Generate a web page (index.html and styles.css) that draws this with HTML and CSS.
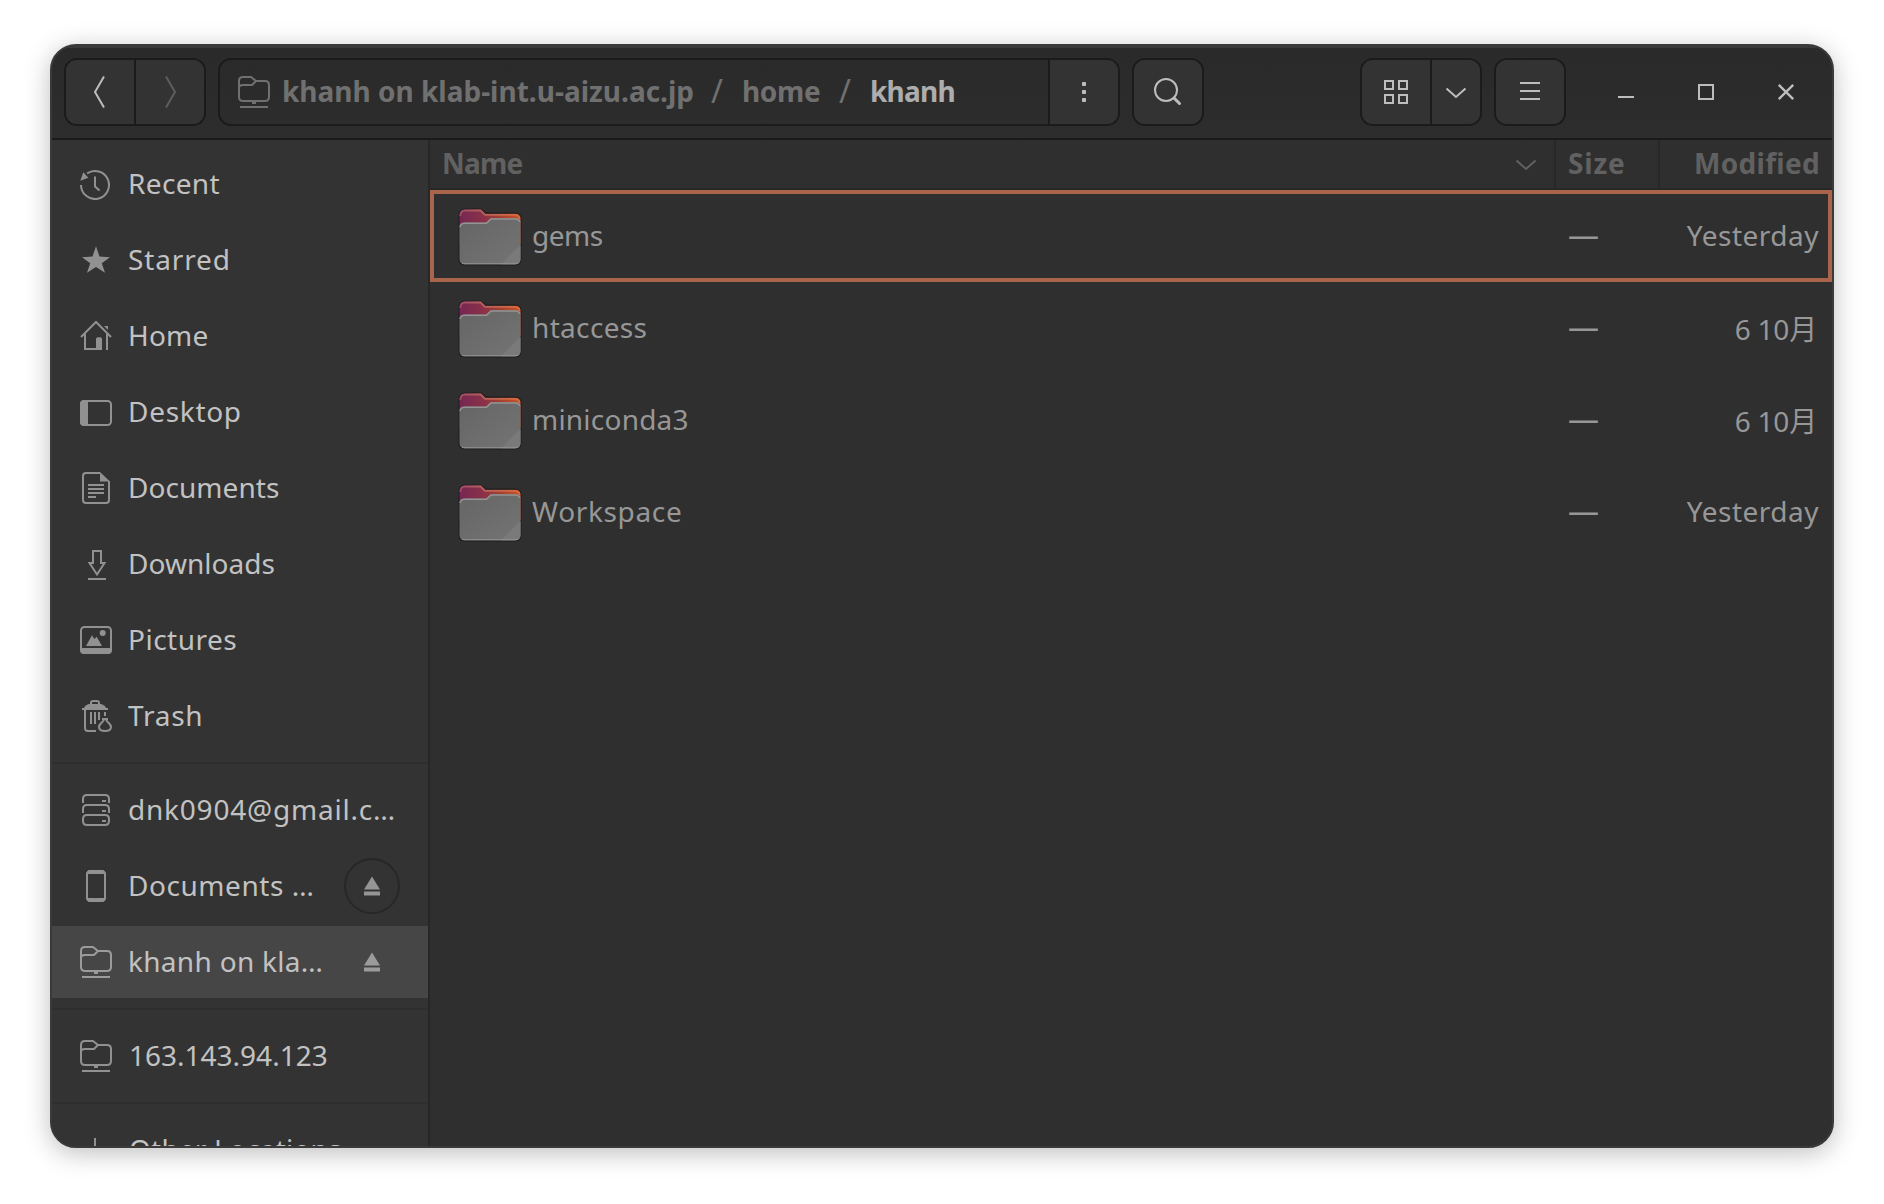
FILE: index.html
```
<!DOCTYPE html>
<html lang="en">
<head>
<meta charset="utf-8">
<title>khanh</title>
<link rel="stylesheet" href="styles.css">
</head>
<body>
<svg class="defs" width="0" height="0">
  <defs>
    <linearGradient id="back" x1="0" y1="0" x2="1" y2="0">
      <stop offset="0" stop-color="#752752"/><stop offset=".4" stop-color="#8c3148"/><stop offset=".7" stop-color="#a8432c"/><stop offset="1" stop-color="#c9542c"/>
    </linearGradient>
    <linearGradient id="rim" x1="0" y1="0" x2="1" y2="0">
      <stop offset="0" stop-color="#9c4c67"/><stop offset=".4" stop-color="#b5615a"/><stop offset="1" stop-color="#d96b3c"/>
    </linearGradient>
    <linearGradient id="front" x1="0" y1="0" x2="1" y2="1">
      <stop offset="0" stop-color="#656565"/><stop offset="1" stop-color="#747474"/>
    </linearGradient>
    <symbol id="remote" viewBox="0 0 32 32">
      <path d="M1 21V5Q1 1 5 1H13L18 5H27Q31 5 31 9V21Q31 25 27 25H5Q1 25 1 21ZM1 12Q1 9 5 9H14L18 5M2 31H30" />
      <path class="solid" d="M14 26h4v2h-4z"/>
    </symbol>
    <symbol id="eject" viewBox="0 0 16 20">
      <path class="solid" d="M8 .5 16 13.5H0ZM0 15.500h16v4H0z"/>
    </symbol>
    <symbol id="folder" viewBox="0 0 64 64">
      <g stroke="none">
        <path d="M.5 12Q.5 4.500 7 4.500H23L28 8.500H57Q63.500 8.500 63.500 15V55Q63.500 61.500 57 61.500H7Q.5 61.500 .5 55Z" fill="#1e1e1e"/>
        <path d="M1.500 12Q1.500 5.500 7 5.500H23L27.500 9.800H57Q62.500 9.800 62.500 15V40H1.500Z" fill="url(#back)"/>
      </g>
      <path d="M2.300 12Q2.500 6.500 7 6.500H22.500L27 10.800H57Q61 10.800 61.700 15" fill="none" stroke="url(#rim)" stroke-width="1.800"/>
      <g stroke="none">
        <path d="M1.500 24Q1.500 18.500 7 18.500H28L32.500 14.200H57Q62.500 14.200 62.500 19V55Q62.500 60.300 57 60.300H7Q1.500 60.300 1.500 55Z" fill="url(#front)"/>
        <path d="M62.500 41V55Q62.500 60.300 57 60.300H43Z" fill="#7a7a7a"/>
      </g>
      <path d="M2 23Q2.500 19.300 7 19.300H28.500L33 15H57Q61 15 62 18" fill="none" stroke="#949494" stroke-width="1.500"/>
      <path d="M4 59Q5 59.800 7 59.800H57Q59 59.800 60 59" fill="none" stroke="#969696" stroke-width="1"/>
    </symbol>
  </defs>
</svg>

<div class="window">
  <header class="headerbar">
    <div class="group nav">
      <button class="btn"><svg width="32" height="32" viewBox="0 0 32 32"><path d="M20 .5 11 16 20 31.500"/></svg></button>
      <button class="btn off"><svg width="32" height="32" viewBox="0 0 32 32"><path d="M12 .5 21 16 12 31.500"/></svg></button>
    </div>
    <div class="group path">
      <nav class="crumbs">
        <svg class="crumb-icon" width="32" height="32"><use href="#remote"/></svg>
        <span class="crumb host">khanh on klab-int.u-aizu.ac.jp</span>
        <span class="slash">/</span>
        <span class="crumb home">home</span>
        <span class="slash">/</span>
        <span class="crumb current">khanh</span>
      </nav>
      <button class="btn"><svg width="32" height="32" viewBox="0 0 32 32"><g class="solid"><rect x="14" y="6" width="4" height="4" rx=".8"/><rect x="14" y="14" width="4" height="4" rx=".8"/><rect x="14" y="22" width="4" height="4" rx=".8"/></g></svg></button>
    </div>
    <div class="group search">
      <button class="btn"><svg width="32" height="32" viewBox="0 0 32 32"><circle cx="14" cy="14" r="11"/><path d="M22 22 27.500 27.500" stroke-width="3" stroke-linecap="round"/></svg></button>
    </div>
    <div class="group view">
      <button class="btn"><svg width="32" height="32" viewBox="0 0 32 32"><path d="M5 5h8v8H5zM19 5h8v8h-8zM5 19h8v8H5zM19 19h8v8h-8z"/></svg></button>
      <button class="btn narrow"><svg width="32" height="32" viewBox="0 0 32 32"><path d="M6.500 12.500 16 21 25.500 12.500"/></svg></button>
    </div>
    <div class="group menu">
      <button class="btn"><svg width="32" height="32" viewBox="0 0 32 32"><path d="M6 7H26M6 15H26M6 23H26"/></svg></button>
    </div>
    <div class="controls">
      <svg width="32" height="32" viewBox="0 0 32 32"><path d="M8 21H24"/></svg>
      <svg width="32" height="32" viewBox="0 0 32 32"><path d="M9 9H23V23H9Z"/></svg>
      <svg width="32" height="32" viewBox="0 0 32 32"><path d="M8.800 8.800 23.200 23.200M23.200 8.800 8.800 23.200" stroke-width="2.400"/></svg>
    </div>
  </header>

  <div class="body">
    <aside class="sidebar">
      <div class="section">
        <div class="place"><svg width="32" height="32" viewBox="0 0 32 32"><path d="M1 17A14 14 0 1 0 7 5.500M15 8.500V18.500L19.500 22.500"/><path class="solid" d="M3.300 4.300 8.300 9.700 .3 12.700Z"/></svg><span class="label recent">Recent</span></div>
        <div class="place"><svg width="32" height="32" viewBox="0 0 32 32"><path class="solid" d="M16 2.300 19.500 12.500 30 13.300 21.800 19.300 25 28.800 16 23 7 28.800 10.200 19.300 2 13.300 12.500 12.500Z"/></svg><span class="label starred">Starred</span></div>
        <div class="place"><svg width="32" height="32" viewBox="0 0 32 32"><path d="M1 17 16 2 31 17M5 14V29H17M27 14V30"/><path class="solid" d="M16 30V19Q16 17.300 18 17.300H20Q22 17.300 22 19V30ZM24 6H28V10Z"/></svg><span class="label home">Home</span></div>
        <div class="place"><svg width="32" height="32" viewBox="0 0 32 32"><rect x="1" y="5" width="30" height="24" rx="3.500"/><path class="solid" d="M8 4V30H4Q0 30 0 26V8Q0 4 4 4Z"/></svg><span class="label desktop">Desktop</span></div>
        <div class="place"><svg width="32" height="32" viewBox="0 0 32 32"><path d="M20 1H6Q3 1 3 4V28Q3 31 6 31H26Q29 31 29 28V9M8 13H24M8 17H24M8 21H24M8 25H16"/><path class="solid" d="M20 0 30 9.500H20Z"/></svg><span class="label documents">Documents</span></div>
        <div class="place"><svg width="32" height="32" viewBox="0 0 32 32"><path d="M13 3H21V15H24.500L17 26.500 9.500 15H13ZM8 31H26"/></svg><span class="label documents">Downloads</span></div>
        <div class="place"><svg width="32" height="32" viewBox="0 0 32 32"><rect x="1" y="3" width="30" height="26" rx="3.500"/><path class="solid" d="M0 24H32V26Q32 30 28 30H4Q0 30 0 26ZM6 22 12 11.300 14.300 15 16.700 12.700 22 22Z"/><circle class="solid" cx="22.700" cy="9" r="3"/></svg><span class="label pictures">Pictures</span></div>
        <div class="place"><svg width="32" height="32" viewBox="0 0 32 32"><path d="M2 9H28M5 9V28Q5 31 8 31H16M11 12V24M15 12V24M19 12V20M25 12V16M11 5V3Q11 1 13 1H17Q19 1 19 3V5M22 19H28M24 20C22 23 19 24 19 27Q19 31 25 31T31 27C31 24 28 23 26 20"/><path class="solid" d="M2 8H28V10H2ZM4 8Q5 5 9 4H21Q25 5 26 8Z"/></svg><span class="label trash">Trash</span></div>
      </div>
      <div class="section">
        <div class="place"><svg width="32" height="32" viewBox="0 0 32 32"><path d="M3 9V5Q3 1 7 1H25Q29 1 29 5V9M3 19V15Q3 11 7 11H25Q29 11 29 15V19M7 21H25Q29 21 29 25V27Q29 31 25 31H7Q3 31 3 27V25Q3 21 7 21ZM22 7H26M22 17H26M22 27H26"/></svg><span class="label account">dnk0904@gmail.c…</span></div>
        <div class="place"><svg width="32" height="32" viewBox="0 0 32 32"><rect x="7" y="1" width="18" height="30" rx="3.500"/><path class="solid" d="M6 4Q7 0 10 0H22Q25 0 26 4ZM6 28H26Q25 32 22 32H10Q7 32 6 28Z"/></svg><span class="label device">Documents …</span><button class="eject ring"><svg width="16" height="20"><use href="#eject"/></svg></button></div>
        <div class="place selected"><svg width="32" height="32"><use href="#remote"/></svg><span class="label server">khanh on kla…</span><button class="eject"><svg width="16" height="20"><use href="#eject"/></svg></button></div>
      </div>
      <div class="section">
        <div class="place"><svg width="32" height="32"><use href="#remote"/></svg><span class="label address">163.143.94.123</span></div>
      </div>
      <div class="section">
        <div class="place"><svg width="32" height="32" viewBox="0 0 32 32"><path d="M15 4V28M3 16H27"/></svg><span class="label other">Other Locations</span></div>
      </div>
    </aside>

    <main class="files">
      <div class="columns">
        <div class="col name"><span>Name</span><svg width="32" height="32" viewBox="0 0 32 32"><path d="M6.500 12.500 16 21 25.500 12.500"/></svg></div>
        <div class="col size"><span>Size</span></div>
        <div class="col modified"><span>Modified</span></div>
      </div>
      <div class="row focused"><div class="file"><svg width="64" height="64"><use href="#folder"/></svg><span class="gems">gems</span></div><div class="bytes">—</div><div class="date">Yesterday</div></div>
      <div class="row"><div class="file"><svg width="64" height="64"><use href="#folder"/></svg><span class="htaccess">htaccess</span></div><div class="bytes">—</div><div class="date cjk">6 10月</div></div>
      <div class="row"><div class="file"><svg width="64" height="64"><use href="#folder"/></svg><span class="miniconda">miniconda3</span></div><div class="bytes">—</div><div class="date cjk">6 10月</div></div>
      <div class="row last"><div class="file"><svg width="64" height="64"><use href="#folder"/></svg><span class="workspace">Workspace</span></div><div class="bytes">—</div><div class="date">Yesterday</div></div>
    </main>
  </div>
</div>
</body>
</html>
```
FILE: styles.css
```
* { box-sizing: border-box; }
body {
  margin: 0;
  padding: 44px 50px 56px;
  height: 1204px;
  overflow: hidden;
  background: #fff;
  font: 28px/38px "Noto Sans", "Noto Sans CJK JP", sans-serif;
  white-space: nowrap;
}
.defs { display: block; height: 0; }
svg { display: block; flex: none; fill: none; stroke: currentColor; stroke-width: 2; }
.solid { fill: currentColor; stroke: none; }
button { margin: 0; padding: 0; border: 0; background: none; color: inherit; font: inherit; }

.window {
  display: flex;
  flex-direction: column;
  height: 1104px;
  border: 2px solid #3a3a3a;
  border-radius: 26px;
  overflow: hidden;
  background: #2f2f2f;
  box-shadow: 0 5px 26px rgba(0, 0, 0, .26);
}

/* header bar */
.headerbar {
  display: flex;
  flex: none;
  height: 94px;
  padding: 10px 0 0 12px;
  border-top: 2px solid #3a3a3a;
  border-bottom: 2px solid #1a1a1a;
  background: linear-gradient(#2a2a2a, #2d2d2d);
  color: #bdbdbd;
}
.group {
  display: flex;
  height: 68px;
  border: 2px solid #1b1b1b;
  border-radius: 13px;
  overflow: hidden;
}
.btn {
  display: flex;
  align-items: center;
  justify-content: center;
  width: 68px;
  background: #333;
}
.btn + .btn, .crumbs + .btn { width: 70px; border-left: 2px solid #1b1b1b; }
.btn + .btn.narrow { width: 50px; }
.off { color: #5d5d5d; }
.nav { width: 142px; }
.path { width: 902px; margin-left: 12px; }
.search { width: 72px; margin-left: 12px; }
.view { width: 122px; margin-left: 156px; }
.menu { width: 72px; margin-left: 12px; }
.crumbs {
  display: flex;
  flex: 1;
  align-items: center;
  padding-left: 18px;
  color: #707070;
  font-weight: 700;
}
.crumbs span { padding-bottom: 2px; }
.crumb-icon { margin-right: 12px; }
.host { width: 427px; }
.slash { width: 33px; padding-left: 2px; font-size: 32px; font-weight: 400; }
.crumb.home { width: 95px; letter-spacing: -.33px; }
.current { color: #adadad; letter-spacing: -.76px; }
.controls { display: flex; gap: 48px; height: 68px; align-items: center; margin-left: 44px; }

/* places */
.body { display: flex; flex: 1; min-height: 0; }
.sidebar {
  width: 378px;
  flex: none;
  overflow: hidden;
  border-right: 2px solid #272727;
  background: #333;
  color: #c2c2c2;
}
.section { display: flex; flex-direction: column; gap: 4px; padding: 10px 0; }
.section:first-child { padding-top: 8px; }
.section + .section { border-top: 2px solid #2e2e2e; }
.place { display: flex; flex: none; align-items: center; height: 72px; padding: 0 28px; }
.place > svg { color: #919191; }
.selected { background: #464646; }
.place.selected > svg { color: #9b9b9b; }
.label { flex: 1; margin-left: 16px; padding-bottom: 2px; }
.recent { letter-spacing: .35px; }
.starred { letter-spacing: .85px; }
.label.home { letter-spacing: .2px; }
.desktop { letter-spacing: .7px; }
.documents { letter-spacing: .05px; }
.pictures { letter-spacing: .5px; }
.trash { letter-spacing: .75px; }
.account { letter-spacing: .78px; }
.device { letter-spacing: .55px; }
.server { letter-spacing: .3px; }
.address { margin-left: 17px; }
.other { margin-left: 17px; letter-spacing: .2px; }
.eject {
  display: flex;
  align-items: center;
  justify-content: center;
  width: 56px;
  height: 56px;
  border: 2px solid transparent;
  border-radius: 50%;
  color: #959595;
}
.eject svg { margin-top: -1px; }
.ring { border-color: #272727; }
.selected .eject { color: #9b9b9b; }

/* file list */
.files { flex: 1; min-width: 0; color: #979797; }
.columns, .row { display: grid; grid-template-columns: 1126px 104px 1fr; }
.columns { height: 50px; border-bottom: 2px solid #272727; color: #616161; font-weight: 700; }
.col { display: flex; align-items: center; }
.col span { padding-bottom: 2px; }
.col.name { justify-content: space-between; padding: 0 12px 0 12px; letter-spacing: -.78px; border-right: 2px solid #282828; }
.col.size { padding-left: 12px; letter-spacing: .8px; border-right: 2px solid #282828; }
.col.modified { justify-content: flex-end; padding-right: 12px; letter-spacing: .3px; }
.row { height: 92px; align-items: center; border-bottom: 1px solid #2d2d2d; }
.row.last { border-bottom: 0; }
.focused { border: 0; outline: 4px solid #a9654c; outline-offset: -4px; }
.file { display: flex; align-items: center; padding-left: 28px; }
.file span { margin-left: 10px; padding-bottom: 2px; }
.gems { letter-spacing: -.5px; }
.htaccess { letter-spacing: .33px; }
.miniconda { letter-spacing: .22px; }
.workspace { letter-spacing: .65px; }
.bytes { padding: 0 0 4px 12px; font-size: 31px; }
.date { padding: 0 13px 2px 0; text-align: right; letter-spacing: .5px; }
.date.cjk { padding: 2px 15px 0 0; letter-spacing: -.2px; }
```
